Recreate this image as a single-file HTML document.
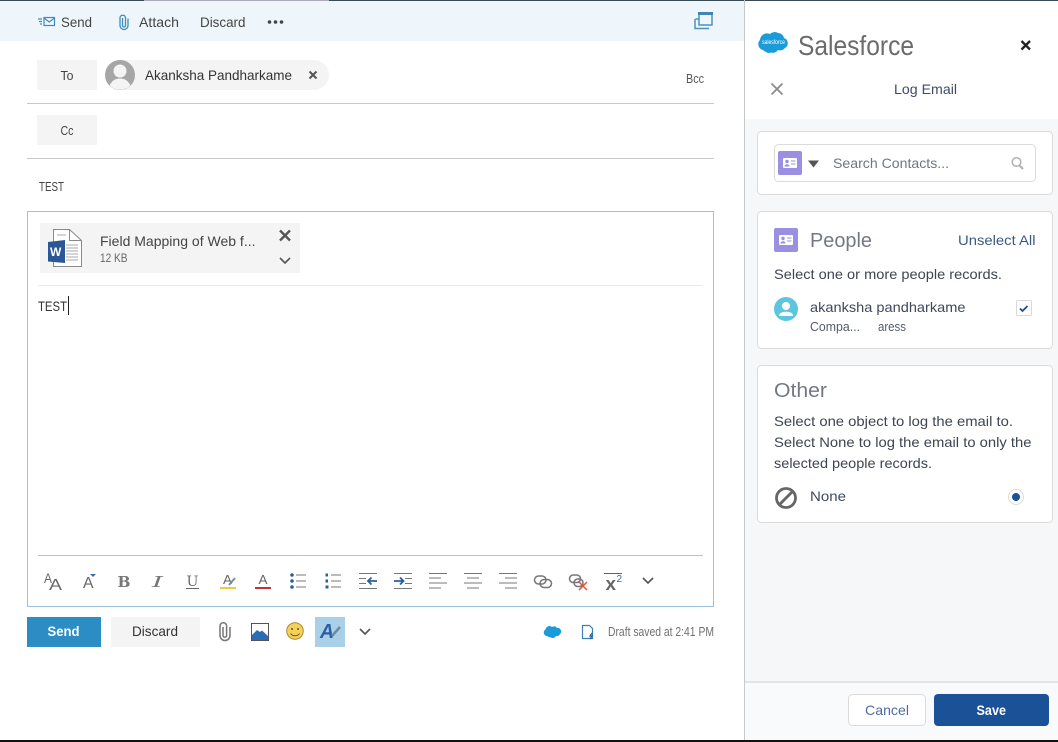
<!DOCTYPE html>
<html><head><meta charset="utf-8"><title>Log Email</title>
<style>
html,body{margin:0;padding:0;background:#fff;width:1058px;height:742px;overflow:hidden}
svg{display:block}
text{font-family:"Liberation Sans",sans-serif;font-size:14px;fill:#444}
</style></head><body>
<svg width="1058" height="742" viewBox="0 0 1058 742" xmlns="http://www.w3.org/2000/svg">
<rect width="1058" height="742" fill="#fff"/>
<!-- top -->
<rect x="0" y="0" width="744" height="41" fill="#eff6fb"/>
<rect x="0" y="0" width="1058" height="1" fill="#3a4a55"/>
<rect x="144" y="0" width="185" height="1" fill="#aab"/>
<!-- panel -->
<rect x="745" y="119" width="313" height="563" fill="#f6f7f9"/>
<rect x="744" y="0" width="1" height="742" fill="#c6c9cc"/>
<rect x="745" y="681" width="313" height="2" fill="#e2e3e5"/>
<rect x="745" y="683" width="313" height="57" fill="#f9fafb"/>
<rect x="0" y="740" width="1058" height="2" fill="#111"/>

<!-- command bar -->
<g fill="none" stroke="#3a8cc0" stroke-width="1.2">
<rect x="44" y="17.5" width="10.5" height="8"/><path d="M44 18l5.2 4 5.3-4"/>
<path d="M38 19h4M39 21.500h3M40 24h2"/>
<path d="M122.500 18v7.500a1.500 1.500 0 0 0 3 0v-8a2.800 2.800 0 0 0-5.500 0v8a4 4 0 0 0 8 0v-7" stroke-width="1.300"/>
</g>
<text x="61" y="27" textLength="31" lengthAdjust="spacingAndGlyphs">Send</text>
<text x="139" y="27" textLength="40" lengthAdjust="spacingAndGlyphs">Attach</text>
<text x="200" y="27" textLength="45.500" lengthAdjust="spacingAndGlyphs">Discard</text>
<g fill="#444"><circle cx="269.500" cy="22" r="1.800"/><circle cx="275.500" cy="22" r="1.800"/><circle cx="281.500" cy="22" r="1.800"/></g>
<g fill="none" stroke="#4a93c0" stroke-width="1.500">
<rect x="699" y="13" width="13" height="12"/><path d="M695 19v9.500h14"/><path d="M695.500 19h3"/>
</g><rect x="698" y="12" width="15" height="3" fill="#3f86b3"/>

<!-- To / Cc -->
<rect x="37" y="60" width="60" height="30" fill="#f4f4f4"/>
<text x="60.500" y="80" style="font-size:13px" textLength="13" lengthAdjust="spacingAndGlyphs">To</text>
<rect x="105" y="60" width="224" height="30" rx="15" fill="#f4f4f4"/>
<circle cx="120" cy="75" r="15" fill="#a6a6a6"/>
<circle cx="120" cy="71" r="6.500" fill="#f4f4f4"/>
<path d="M109.500 85.500c3-6 7-7 10.500-7s7.500 1 10.500 7a15 15 0 0 1-21 0z" fill="#f4f4f4"/>
<text x="145" y="80" textLength="147" lengthAdjust="spacingAndGlyphs" style="fill:#333">Akanksha Pandharkame</text>
<path d="M309.500 71.500l7 7M316.500 71.500l-7 7" stroke="#555" stroke-width="2" fill="none"/>
<text x="686" y="83" style="font-size:13px;fill:#555" textLength="18" lengthAdjust="spacingAndGlyphs">Bcc</text>
<rect x="27" y="103" width="687" height="1" fill="#c8c8c8"/>
<rect x="37" y="115" width="60" height="30" fill="#f4f4f4"/>
<text x="60.500" y="135" style="font-size:13px" textLength="13" lengthAdjust="spacingAndGlyphs">Cc</text>
<rect x="27" y="158" width="687" height="1" fill="#c8c8c8"/>
<text x="39" y="191" style="font-size:13px" textLength="25" lengthAdjust="spacingAndGlyphs">TEST</text>

<!-- body -->
<rect x="27.500" y="211.500" width="686" height="395" fill="#fff" stroke="#9cc3da"/>
<rect x="40" y="223" width="260" height="50" fill="#f4f4f4"/>
<path d="M53.500 229.500h16l12 11v26h-28z" fill="#fff" stroke="#8a8a8a"/>
<path d="M69.500 229.500v11h12" fill="none" stroke="#8a8a8a"/>
<path d="M66 245h12M66 248h12M66 251h12M66 254h12M66 257h12M66 260h12M57 235h9" stroke="#a8a8a8"/>
<path d="M48 242l17-2v23l-17-1.500z" fill="#2b5797"/>
<text x="50" y="256" style="font-size:12px;font-weight:bold;fill:#fff">W</text>
<text x="100" y="246" textLength="155.500" lengthAdjust="spacingAndGlyphs">Field Mapping of Web f...</text>
<text x="100" y="262" style="font-size:11.500px;fill:#666" textLength="27.500" lengthAdjust="spacingAndGlyphs">12 KB</text>
<path d="M280 230.500l10 10M290 230.500l-10 10" stroke="#555" stroke-width="2.400" fill="none"/>
<path d="M280 258l5 5 5-5" stroke="#555" stroke-width="1.600" fill="none"/>
<rect x="38" y="285" width="665" height="1" fill="#eaeaea"/>
<text x="38" y="311" textLength="29" lengthAdjust="spacingAndGlyphs" style="fill:#333">TEST</text>
<rect x="68" y="296" width="1" height="19" fill="#222"/>
<rect x="38" y="555" width="665" height="1" fill="#bcc3c7"/>

<!-- toolbar -->
<text x="44" y="583" style="font-size:14px;fill:#666" textLength="8" lengthAdjust="spacingAndGlyphs">A</text>
<text x="49" y="590" style="font-size:15.500px;fill:#666" textLength="13" lengthAdjust="spacingAndGlyphs">A</text>
<text x="83" y="588" style="font-size:15.500px;fill:#666" textLength="10.500" lengthAdjust="spacingAndGlyphs">A</text>
<path d="M90 574h6l-3 3z" fill="#3d6aa0"/>
<text x="117.500" y="587" style="font-family:'DejaVu Serif',serif;font-size:15px;font-weight:bold;fill:#777" textLength="13" lengthAdjust="spacingAndGlyphs">B</text>
<text x="152" y="587" style="font-family:'DejaVu Serif',serif;font-size:15px;font-style:italic;fill:#777" textLength="11" lengthAdjust="spacingAndGlyphs">I</text>
<text x="186.500" y="586" style="font-family:'DejaVu Serif',serif;font-size:14px;fill:#6a6a6a" textLength="12" lengthAdjust="spacingAndGlyphs">U</text>
<rect x="186" y="588" width="13" height="1" fill="#666"/>
<text x="223" y="584" style="font-size:13px;fill:#666" textLength="9" lengthAdjust="spacingAndGlyphs">A</text>
<path d="M229 585l6-7" stroke="#7a8ea8" stroke-width="2"/>
<rect x="220" y="587" width="16" height="2" fill="#f0c93c"/>
<text x="258.500" y="584" style="font-size:13px;fill:#666" textLength="9" lengthAdjust="spacingAndGlyphs">A</text>
<rect x="255" y="587" width="16" height="2" fill="#c0333a"/>
<g fill="#2b5f9c"><circle cx="292" cy="575" r="1.800"/><circle cx="292" cy="581" r="1.800"/><circle cx="292" cy="587" r="1.800"/>
<rect x="325.500" y="573.500" width="2.500" height="3"/><rect x="325.500" y="579.500" width="2.500" height="3"/><rect x="325.500" y="585.500" width="3" height="3"/></g>
<g stroke="#777" stroke-width="1" fill="none">
<path d="M296 575h10M296 581h10M296 587h10"/>
<path d="M331 575h10M331 581h10M331 587h10"/>
<path d="M359 573.500h18M359 578.500h7M359 583.500h7M359 588.500h18"/>
<path d="M394 573.500h18M405 578.500h7M405 583.500h7M394 588.500h18"/>
<path d="M429 573.500h18M429 578h12M429 583h18M429 588h12"/>
<path d="M464 573.500h18M467 578h12M464 583h18M467 588h12"/>
<path d="M499 573.500h18M505 578h12M499 583h18M505 588h12"/>
</g>
<g stroke="#2b5f9c" stroke-width="1.800" fill="none">
<path d="M377 581h-9M371.500 577.500l-3.500 3.500 3.500 3.500"/>
<path d="M394 581h9M400 577.500l3.500 3.500-3.500 3.500"/>
</g>
<g fill="none" stroke="#777" stroke-width="1.500">
<rect x="534.500" y="576" width="11.500" height="8" rx="4"/><rect x="540" y="579.500" width="11.500" height="8" rx="4"/>
<rect x="569.500" y="575" width="11" height="7.500" rx="3.700"/><rect x="574" y="579" width="9" height="7.500" rx="3.700"/>
</g>
<path d="M579 582l8 8M587 582l-8 8" stroke="#e0533d" stroke-width="1.500"/>
<rect x="604" y="573" width="18" height="1" fill="#3d6aa0"/>
<text x="605.500" y="590" style="font-size:18px;font-weight:bold;fill:#666" textLength="10.500" lengthAdjust="spacingAndGlyphs">x</text>
<text x="616.500" y="582" style="font-size:10px;fill:#3d6aa0">2</text>
<path d="M643 578l5 5 5-5" stroke="#555" stroke-width="1.600" fill="none"/>

<!-- actions -->
<rect x="27" y="617" width="74" height="30" fill="#2b8dc4"/>
<text x="47.500" y="636" style="font-weight:bold;fill:#fff" textLength="32" lengthAdjust="spacingAndGlyphs">Send</text>
<rect x="111" y="617" width="89" height="30" fill="#f4f4f4"/>
<text x="132" y="636" textLength="46" lengthAdjust="spacingAndGlyphs" style="fill:#333">Discard</text>
<path d="M223 627v8.500a1.800 1.800 0 0 0 3.600 0v-9.500a3.300 3.300 0 0 0-6.600 0v9.500a5 5 0 0 0 10 0v-8.500" fill="none" stroke="#777" stroke-width="1.500"/>
<rect x="251.500" y="623.500" width="17" height="17" fill="#fff" stroke="#555"/>
<path d="M252 640v-5l5-5 3 2 2-1.500 6 5.500v4z" fill="#2b6cb5"/>
<circle cx="295" cy="631" r="8.300" fill="#f7d154" stroke="#a8893a" stroke-width="1"/>
<circle cx="292" cy="629" r="1" fill="#555"/><circle cx="298" cy="629" r="1" fill="#555"/>
<path d="M290.500 633.500c2 3 7 3 9 0" stroke="#555" fill="none"/>
<rect x="315" y="617" width="30" height="30" fill="#a9d0e8"/>
<text x="320" y="638" style="font-size:20px;font-weight:bold;font-style:italic;fill:#2b5fa5" textLength="14" lengthAdjust="spacingAndGlyphs">A</text>
<path d="M332 636l8-9" stroke="#6f8a9c" stroke-width="2.500"/>
<path d="M360 629l5 5 5-5" stroke="#555" stroke-width="1.600" fill="none"/>
<path d="M549 637a4 4 0 0 1-2-1a3.500 3.500 0 0 1-1.500-6.500a4 4 0 0 1 6.500-2.500a3.500 3.500 0 0 1 5 1a3.500 3.500 0 0 1 3 6a3.500 3.500 0 0 1-4 2a3.500 3.500 0 0 1-5 1.500z" fill="#1b9bd8"/>
<path d="M582.500 625.500h7l3 3v10h-10z" fill="#fff" stroke="#3a7fb5" stroke-width="1.200"/>
<path d="M592 633l-2 3h2l-2 3" stroke="#2b5f9c" stroke-width="1.200" fill="none"/>
<text x="608" y="636" style="font-size:12.500px;fill:#707070" textLength="106" lengthAdjust="spacingAndGlyphs">Draft saved at 2:41 PM</text>

<!-- panel header -->
<path d="M766 52a6 6 0 0 1-3-2a6 6 0 0 1-3-10a7 7 0 0 1 10-6a6.500 6.500 0 0 1 8-1a6 6 0 0 1 6 5a5.500 5.500 0 0 1 1 10a6 6 0 0 1-7 2a6 6 0 0 1-7 2.500a5 5 0 0 1-5-0.500z" fill="#1b9bd8"/>
<text x="762" y="44" style="font-size:6px;fill:#fff" textLength="23" lengthAdjust="spacingAndGlyphs">salesforce</text>
<text x="798" y="55" style="font-size:28px;fill:#6b6b6b" textLength="116" lengthAdjust="spacingAndGlyphs">Salesforce</text>
<path d="M1021.500 41l8.500 8.500M1030 41l-8.500 8.500" stroke="#222" stroke-width="2.300" fill="none"/>
<path d="M771.500 83.500l11 11M782.500 83.500l-11 11" stroke="#8a8a8a" stroke-width="1.700" fill="none"/>
<text x="894" y="94" textLength="63" lengthAdjust="spacingAndGlyphs" style="fill:#3e4a66">Log Email</text>

<!-- search card -->
<rect x="757.500" y="131.500" width="295" height="63" rx="4" fill="#fff" stroke="#dddbda"/>
<rect x="774.500" y="144.500" width="261" height="37" rx="4" fill="#fff" stroke="#dddbda"/>
<rect x="778" y="151" width="24" height="24" rx="2" fill="#9a8fe0"/>
<rect x="783" y="158" width="14" height="10" rx="1" fill="#fff"/>
<circle cx="787" cy="161.500" r="1.700" fill="#9a8fe0"/><path d="M784.500 166.500c0-3 5-3 5 0z" fill="#9a8fe0"/><path d="M791 161h4.500M791 164h4.500" stroke="#9a8fe0"/>
<path d="M808 160.500h11l-5.500 7z" fill="#555"/>
<text x="833" y="168" textLength="116" lengthAdjust="spacingAndGlyphs" style="fill:#6f7780">Search Contacts...</text>
<circle cx="1016.500" cy="162" r="4.300" fill="none" stroke="#b0b0b0" stroke-width="1.500"/>
<path d="M1019.500 165.500l3.500 3.500" stroke="#b0b0b0" stroke-width="2"/>

<!-- People card -->
<rect x="757.500" y="211.500" width="295" height="137" rx="4" fill="#fff" stroke="#dddbda"/>
<rect x="774" y="228" width="24" height="24" rx="2" fill="#9a8fe0"/>
<rect x="779" y="235" width="14" height="10" rx="1" fill="#fff"/>
<circle cx="783" cy="238.500" r="1.700" fill="#9a8fe0"/><path d="M780.500 243.500c0-3 5-3 5 0z" fill="#9a8fe0"/><path d="M787 238h4.500M787 241h4.500" stroke="#9a8fe0"/>
<text x="810" y="247" style="font-size:20px;fill:#737884" textLength="62" lengthAdjust="spacingAndGlyphs">People</text>
<text x="958" y="245" textLength="77.500" lengthAdjust="spacingAndGlyphs" style="fill:#3b5a80">Unselect All</text>
<text x="774" y="279" textLength="228" lengthAdjust="spacingAndGlyphs" style="fill:#3e4450">Select one or more people records.</text>
<circle cx="786" cy="309" r="12" fill="#5dc5dc"/>
<circle cx="786" cy="306" r="4" fill="#fff"/>
<path d="M779 315.500c0-5 14-5 14 0v0.500h-14z" fill="#fff"/>
<text x="810" y="312" textLength="155.500" lengthAdjust="spacingAndGlyphs" style="fill:#3e4a5a">akanksha pandharkame</text>
<text x="810" y="331" style="font-size:12.500px;fill:#555c68" textLength="50" lengthAdjust="spacingAndGlyphs">Compa...</text>
<text x="878" y="331" style="font-size:12.500px;fill:#555c68" textLength="28" lengthAdjust="spacingAndGlyphs">aress</text>
<rect x="1016.500" y="300.500" width="15" height="15" rx="1" fill="#fff" stroke="#d8d8d8"/>
<path d="M1020 308.500l2.500 2.500 5-5" stroke="#1b4f8a" stroke-width="1.800" fill="none"/>

<!-- Other card -->
<rect x="757.500" y="365.500" width="295" height="157" rx="4" fill="#fff" stroke="#dddbda"/>
<text x="774" y="397" style="font-size:20px;fill:#737884" textLength="53" lengthAdjust="spacingAndGlyphs">Other</text>
<text x="774" y="426" textLength="239" lengthAdjust="spacingAndGlyphs" style="fill:#3e4450">Select one object to log the email to.</text>
<text x="774" y="447" textLength="257.500" lengthAdjust="spacingAndGlyphs" style="fill:#3e4450">Select None to log the email to only the</text>
<text x="774" y="468" textLength="158" lengthAdjust="spacingAndGlyphs" style="fill:#3e4450">selected people records.</text>
<circle cx="786" cy="498" r="9.500" fill="none" stroke="#666" stroke-width="2.800"/>
<path d="M779.500 504.500l13-13" stroke="#666" stroke-width="2.800"/>
<text x="810" y="501" textLength="36" lengthAdjust="spacingAndGlyphs" style="fill:#3e4a5a">None</text>
<circle cx="1016" cy="497" r="7.500" fill="#fff" stroke="#dddbda"/>
<circle cx="1016" cy="497" r="4" fill="#1b5297"/>

<!-- footer -->
<rect x="848.500" y="694.500" width="77" height="31" rx="4" fill="#fff" stroke="#dddbda"/>
<text x="865" y="715" textLength="44" lengthAdjust="spacingAndGlyphs" style="fill:#4d6c9f">Cancel</text>
<rect x="934" y="694" width="115" height="32" rx="4" fill="#1b5297"/>
<text x="976.500" y="715" textLength="29.500" lengthAdjust="spacingAndGlyphs" style="fill:#fff;font-weight:bold">Save</text>
</svg>
</body></html>
